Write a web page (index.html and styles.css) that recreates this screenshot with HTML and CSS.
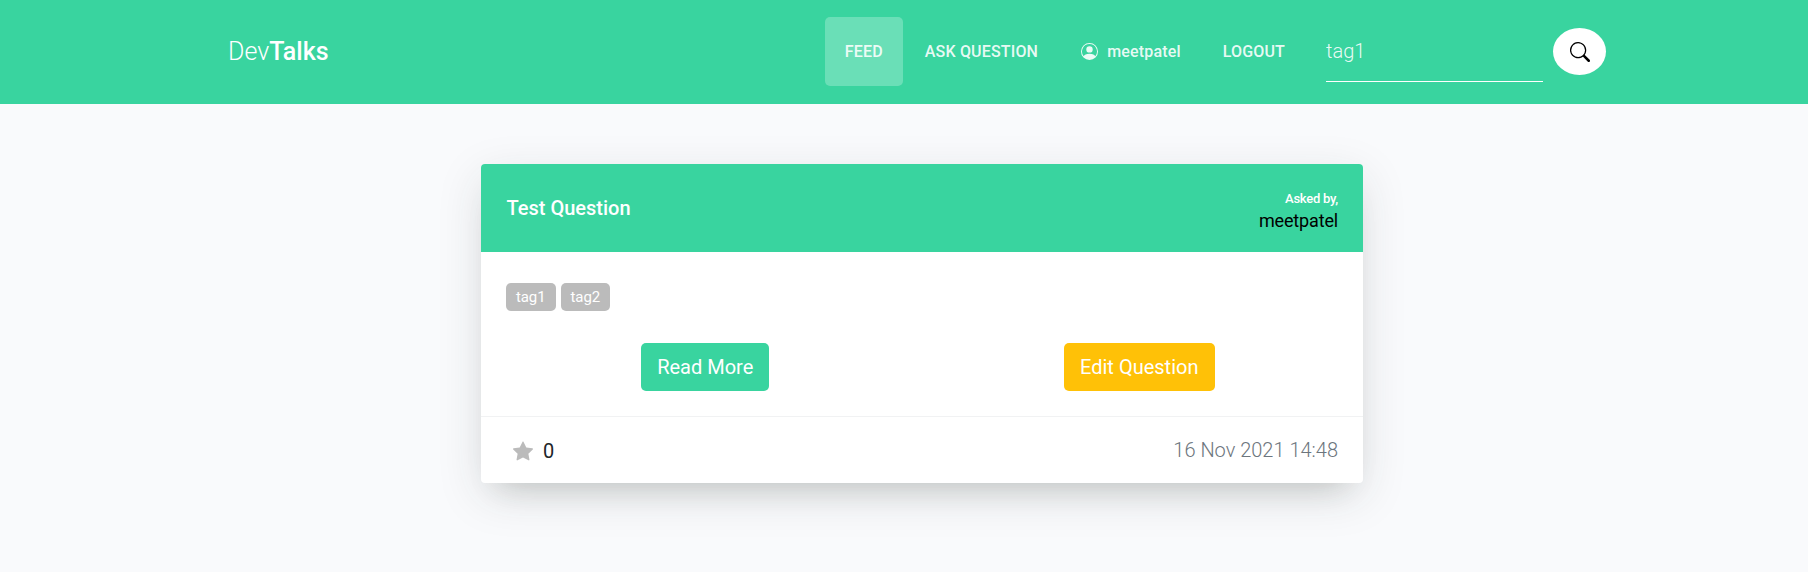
FILE: index.html
```html
<!DOCTYPE html>
<html lang="en">
<head>
<meta charset="utf-8">
<title>DevTalks</title>
<link rel="stylesheet" href="styles.css">
</head>
<body>
<header class="navbar">
  <a class="brand">Dev<b>Talks</b></a>
  <nav class="menu">
    <a class="link active">FEED</a>
    <a class="link ask">ASK QUESTION</a>
    <a class="link user"><svg class="person" viewBox="0 0 16 16"><path d="M11 6a3 3 0 1 1-6 0 3 3 0 0 1 6 0z"/><path fill-rule="evenodd" d="M0 8a8 8 0 1 1 16 0A8 8 0 0 1 0 8zm8-7a7 7 0 0 0-5.468 11.37C3.242 11.226 4.805 10 8 10s4.757 1.225 5.468 2.37A7 7 0 0 0 8 1z"/></svg><span>meetpatel</span></a>
    <a class="link">LOGOUT</a>
  </nav>
  <form class="search">
    <input class="field" type="text" value="tag1">
    <button class="go" type="button"><svg viewBox="0 0 16 16"><path d="M11.742 10.344a6.5 6.5 0 1 0-1.397 1.398h-.001c.03.04.062.078.098.115l3.85 3.85a1 1 0 0 0 1.415-1.414l-3.85-3.85a1.007 1.007 0 0 0-.115-.1zM12 6.5a5.5 5.5 0 1 1-11 0 5.5 5.5 0 0 1 11 0z"/></svg></button>
  </form>
</header>
<main class="card">
  <div class="card-head">
    <h1 class="title">Test Question</h1>
    <div class="author"><span class="by">Asked by,</span><a class="name">meetpatel</a></div>
  </div>
  <div class="card-body">
    <div class="tags"><span class="tag">tag1</span><span class="tag">tag2</span></div>
    <div class="actions">
      <a class="btn primary">Read More</a>
      <a class="btn warning">Edit Question</a>
    </div>
  </div>
  <div class="card-foot">
    <div class="votes"><svg class="star" viewBox="0 0 16 16"><path d="M3.612 15.443c-.386.198-.824-.149-.746-.592l.83-4.73L.173 6.765c-.329-.314-.158-.888.283-.95l4.898-.696L7.538.792c.197-.39.73-.39.927 0l2.184 4.327 4.898.696c.441.062.612.636.282.95l-3.522 3.356.83 4.73c.078.443-.36.79-.746.592L8 13.187l-4.389 2.256z"/></svg><span>0</span></div>
    <time class="date">16 Nov 2021 14:48</time>
  </div>
</main>
</body>
</html>
```
FILE: styles.css
```css
* { box-sizing: border-box; }
body {
  margin: 0;
  min-height: 100vh;
  background: #f9fafc;
  color: #212529;
  font: 400 20px/1.5 Roboto, sans-serif;
}
.navbar {
  height: 104px;
  padding: 0 202px 1px 228px;
  display: flex;
  align-items: center;
  background: #39d49f;
  color: #fff;
}
.brand { padding-top: 1px; font-size: 25px; font-weight: 300; line-height: 30px; }
.brand b { font-weight: 500; }
.menu { margin-left: auto; display: flex; gap: 2px; }
.link {
  height: 69px;
  padding: 0 20px;
  display: flex;
  align-items: center;
  border-radius: 5px;
  font-size: 16px;
  font-weight: 500;
  letter-spacing: .17px;
  color: rgba(255, 255, 255, .9);
}
.active { background: rgba(255, 255, 255, .25); }
.person { width: 17px; height: 17px; margin: 0 9px 0 1px; fill: currentColor; }
.search { display: flex; align-items: center; margin-left: 21px; }
.field {
  width: 217px;
  height: 61px;
  margin-right: 10px;
  padding: 0;
  border: 0;
  border-bottom: 1px solid #fff;
  background: transparent;
  color: rgba(255, 255, 255, .9);
  font: 300 20px Roboto, sans-serif;
  outline: 0;
}
.go {
  width: 53px;
  height: 47px;
  padding: 0;
  display: grid;
  place-items: center;
  border: 0;
  border-radius: 50%;
  background: #fff;
}
.go svg { width: 20px; height: 20px; }
.card {
  width: 882px;
  margin: 60px 0 0 481px;
  border-radius: 4px;
  background: #fff;
  box-shadow: 0 13px 46px rgba(40, 45, 50, .13), 0 20px 30px -20px rgba(40, 50, 30, .22);
}
.card-head {
  height: 88px;
  padding: 0 25px;
  display: flex;
  justify-content: space-between;
  align-items: center;
  border-radius: 4px 4px 0 0;
  background: #39d49f;
}
.title { margin: 0 0 0 .5px; font-size: 20px; font-weight: 500; color: #fff; }
.author { display: flex; flex-direction: column; align-items: flex-end; padding-top: 5px; }
.by { font-size: 13px; font-weight: 500; line-height: 20px; letter-spacing: -.25px; color: #fff; }
.name { font-size: 18px; line-height: 24px; letter-spacing: -.15px; color: #000; }
.card-body { padding: 31px 0 25px; }
.tags { display: flex; gap: 5px; padding-left: 25px; }
.tag {
  height: 28px;
  padding: 0 10px;
  border-radius: 5px;
  background: #bbb;
  color: #fff;
  font-size: 15px;
  letter-spacing: -.1px;
  line-height: 28px;
}
.actions {
  margin-top: 32px;
  padding: 0 6px 0 7px;
  display: grid;
  grid-template-columns: 1fr 1fr;
  justify-items: center;
}
.btn {
  height: 48px;
  padding: 0 16px;
  border-radius: 5px;
  color: #fff;
  line-height: 48px;
}
.primary { background: #39d49f; }
.warning { padding-right: 17px; background: #ffc107; }
.card-foot {
  height: 67px;
  padding: 0 25px 0 32px;
  display: flex;
  justify-content: space-between;
  align-items: center;
  border-top: 1px solid #f1f2f3;
}
.votes { display: flex; align-items: center; gap: 10px; padding-top: 2px; }
.star { width: 20px; height: 20px; fill: #bbb; }
.date { font-weight: 300; color: #6c757d; }
```
